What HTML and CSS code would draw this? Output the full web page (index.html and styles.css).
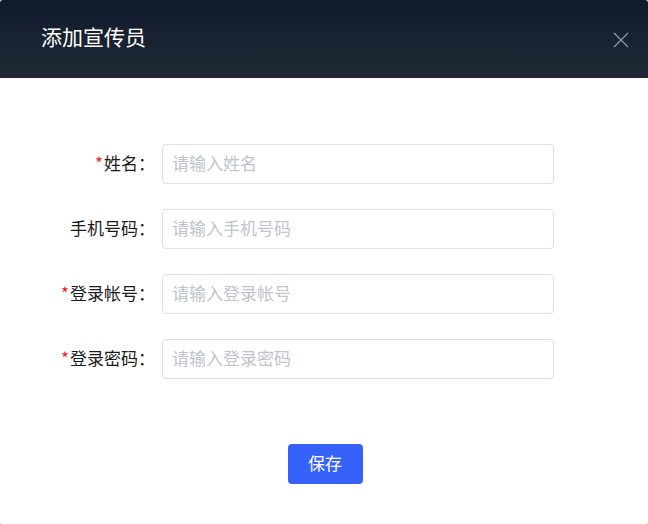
FILE: index.html
```html
<!DOCTYPE html>
<html lang="zh-CN">
<head>
<meta charset="utf-8">
<title>添加宣传员</title>
<link rel="stylesheet" href="styles.css">
</head>
<body>
<div class="dialog">
  <div class="dialog-header">
    <span class="dialog-title">添加宣传员</span>
    <button class="dialog-close" aria-label="关闭">
      <svg width="16" height="16" viewBox="0 0 16 16"><path d="M1 1L15 15M15 1L1 15" stroke="#8f969f" stroke-width="1.3" fill="none"/></svg>
    </button>
  </div>
  <div class="dialog-body">
    <form class="form">
      <div class="form-item">
        <label class="form-label"><span class="req">*</span>姓名：</label>
        <input class="form-input" type="text" placeholder="请输入姓名">
      </div>
      <div class="form-item">
        <label class="form-label">手机号码：</label>
        <input class="form-input" type="text" placeholder="请输入手机号码">
      </div>
      <div class="form-item">
        <label class="form-label"><span class="req">*</span>登录帐号：</label>
        <input class="form-input" type="text" placeholder="请输入登录帐号">
      </div>
      <div class="form-item">
        <label class="form-label"><span class="req">*</span>登录密码：</label>
        <input class="form-input" type="text" placeholder="请输入登录密码">
      </div>
    </form>
    <div class="dialog-footer">
      <button class="btn-primary" type="button">保存</button>
    </div>
  </div>
</div>
</body>
</html>
```

FILE: styles.css
```css
* { box-sizing: border-box; }
html, body {
  margin: 0;
  padding: 0;
  width: 648px;
  height: 524px;
  background: #d9dadc;
  font-family: "Noto Sans CJK SC", "Noto Sans", sans-serif;
}
.dialog {
  width: 648px;
  height: 524px;
  background: #ffffff;
  border-radius: 3px;
  overflow: hidden;
  display: flex;
  flex-direction: column;
}
.dialog-header {
  height: 78px;
  flex: 0 0 78px;
  background: linear-gradient(180deg, #111a2b 0%, #1f2a36 100%);
  display: flex;
  align-items: center;
  justify-content: space-between;
  padding: 0 19px 0 41px;
}
.dialog-title {
  color: #ffffff;
  font-size: 21px;
  line-height: 24px;
  margin-top: -6px;
}
.dialog-close {
  background: none;
  border: 0;
  padding: 0;
  width: 16px;
  height: 16px;
  display: flex;
  margin-top: 2px;
}
.dialog-body {
  flex: 1;
  display: flex;
  flex-direction: column;
  padding-top: 66px;
}
.form {
  display: flex;
  flex-direction: column;
  gap: 25px;
}
.form-item {
  display: flex;
  align-items: center;
  height: 40px;
}
.form-label {
  width: 162px;
  flex: 0 0 162px;
  padding-right: 7px;
  padding-bottom: 3px;
  text-align: right;
  font-size: 17px;
  color: #1b1b1b;
  line-height: 37px;
  white-space: nowrap;
}
.req {
  color: #f41e1e;
  margin-right: 1px;
}
.form-input {
  width: 392px;
  height: 40px;
  border: 1px solid #dcdfe6;
  border-radius: 4px;
  padding: 0 10px 3px 9px;
  font-family: inherit;
  font-size: 17px;
  color: #333;
  outline: none;
  background: #fff;
}
.form-input::placeholder {
  color: #c0c4cc;
}
.dialog-footer {
  display: flex;
  justify-content: center;
  padding-top: 65px;
}
.btn-primary {
  width: 75px;
  height: 40px;
  background: #3661fb;
  color: #ffffff;
  border: 0;
  border-radius: 4px;
  font-family: inherit;
  font-size: 17px;
  padding: 0 0 3px 0;
  margin-left: 2px;
}
```
